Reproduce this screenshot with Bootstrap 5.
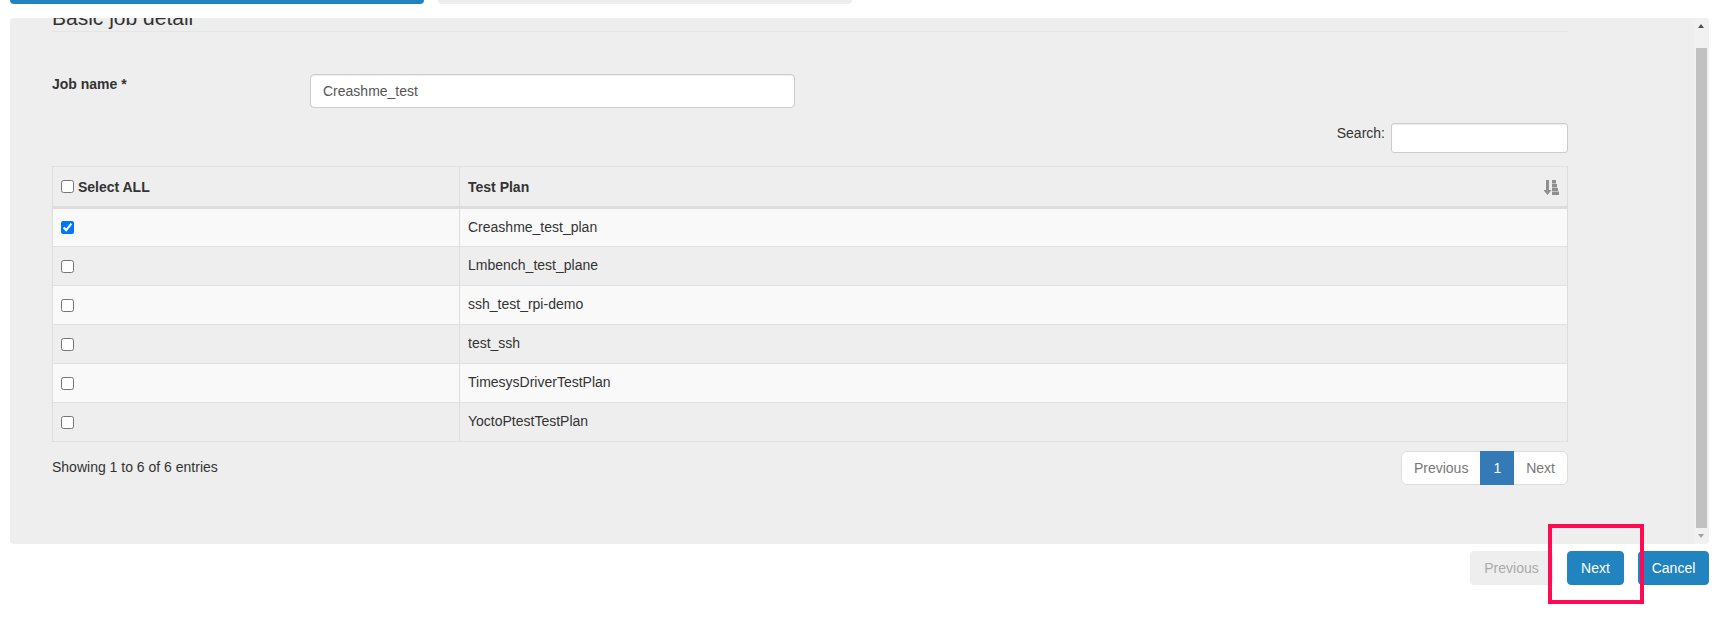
<!DOCTYPE html>
<html lang="en">
<head>
<meta charset="utf-8">
<title>Basic job detail</title>
<link href="https://cdn.jsdelivr.net/npm/bootstrap@5.3.0/dist/css/bootstrap.min.css" rel="stylesheet">
<style>
html,body{height:619px;overflow:hidden;background:#fff}
body{font-family:"Liberation Sans",Arial,sans-serif;font-size:14px;line-height:20px;color:#333;padding:0 4px 0 10px}
.tabs-row{height:4px;gap:14px}
.tab-bar{width:414px;height:4px;border-radius:0 0 4px 4px;background:#eee}
.tab-bar.on{background:#2184be}
.panel-box{height:526px;margin-top:14px;background:#eee;border-radius:4px;overflow:hidden}
.panel-main{width:1558px;padding:0 0 0 42px;flex:none}
.panel-inner{width:1516px}
.sect-title{font-size:21px;line-height:24px;font-weight:400;margin:-12px 0 0;padding-bottom:6px;height:26px;border-bottom:1px solid #e5e5e5;color:#333}
.name-row{margin-top:42px;height:34px}
.name-label{width:258px;font-weight:700;padding-top:0;line-height:20px;margin:0}
.name-input{width:485px;height:34px;font-size:14px;color:#555;padding:6px 12px;border:1px solid #ccc;border-radius:4px;box-shadow:inset 0 1px 1px rgba(0,0,0,.075)}
.search-row{margin-top:15px;height:30px;gap:6px}
.search-row label{margin:0;line-height:20px}
.search-input{width:177px;height:30px;font-size:14px;padding:5px 10px;border:1px solid #ccc;border-radius:3px;box-shadow:inset 0 1px 1px rgba(0,0,0,.075)}
.plan-table{margin:13px 0 0;table-layout:fixed;width:1516px;border-collapse:collapse;--bs-table-bg:transparent;--bs-table-striped-bg:transparent;--bs-table-color:#333;--bs-table-striped-color:#333;font-size:14px}
.plan-table>*>*>*{border:1px solid #ddd;padding:8px;line-height:20px;color:#333;box-shadow:none;vertical-align:middle}
.plan-table thead th{height:41px;border-bottom:3px solid #ddd;background:#eee;font-weight:700;position:relative;vertical-align:middle}
.plan-table tbody td{height:39px;padding-top:6px;padding-bottom:8px}
.plan-table tbody tr:nth-child(odd) td{background:#f9f9f9}
.plan-table tbody tr:nth-child(even) td{background:#eee}
.plan-table input{margin:0;width:13px;height:13px;vertical-align:middle;display:inline-block}
.plan-table thead input{vertical-align:-1px}
.col-check{width:407px}
.sort-glyph{position:absolute;right:8px;top:13px;width:15px;height:15px}
.foot-row{margin-top:8.500px}
.foot-info{padding-top:6px}
.plan-pager{margin:0}
.plan-pager .page-link{line-height:20px;height:34px;font-size:14px;padding:6px 12px;color:#777;border-color:#ddd}
.plan-pager .active .page-link{color:#fff;background:#337ab7;border-color:#337ab7}
.fake-scroll{width:15px;flex:none;margin-left:auto;background:#f1f1f1;position:relative}
.thumb-bar{position:absolute;left:2px;right:2px;top:30px;bottom:16px;background:#c1c1c1}
.arrow-up,.arrow-dn{position:absolute;left:4px;width:0;height:0;border-left:3.500px solid transparent;border-right:3.500px solid transparent}
.arrow-up{top:6px;border-bottom:4px solid #505050}
.arrow-dn{bottom:6px;border-top:4px solid #a3a3a3}
.action-row{margin-top:7px;height:34px}
.act-btn{height:34px;font-size:14px;line-height:20px;padding:6px 12px;border-radius:4px;border:1px solid #2184be;background:#2184be;color:#fff}
.act-btn.off{background:#eee;border-color:#eee;color:#aaa;opacity:1;width:83px;margin-right:14px}
.act-next{width:57px;margin-right:14px}
.act-cancel{width:71px}
.next-wrap{position:relative}
.red-frame{position:absolute;left:-19px;right:-20px;top:-27px;bottom:-19px;border:4px solid #ff0a54;pointer-events:none}
</style>
</head>
<body>
<div class="tabs-row d-flex">
  <div class="tab-bar on"></div>
  <div class="tab-bar"></div>
</div>
<div class="panel-box d-flex">
  <div class="panel-main">
    <div class="panel-inner">
      <h4 class="sect-title">Basic job detail</h4>
      <div class="name-row d-flex">
        <label class="name-label" for="jobName">Job name *</label>
        <input id="jobName" class="form-control name-input" type="text" value="Creashme_test">
      </div>
      <div class="search-row d-flex justify-content-end">
        <label for="srch">Search:</label>
        <input id="srch" class="form-control search-input" type="search">
      </div>
      <table class="table table-bordered table-striped plan-table">
        <colgroup><col class="col-check"><col></colgroup>
        <thead>
          <tr>
            <th><input type="checkbox" aria-label="Select all"> Select ALL</th>
            <th>Test Plan
              <svg class="sort-glyph" viewBox="0 0 15 15" fill="#8f8f8f" aria-hidden="true">
                <path d="M2 0h3v10h2.500l-4 5-4-5H2z"/>
                <rect x="8" y="0" width="4" height="3.500"/>
                <rect x="8" y="4" width="5" height="3.500"/>
                <rect x="8" y="8" width="6" height="3"/>
                <rect x="8" y="11.500" width="7" height="3.500"/>
              </svg>
            </th>
          </tr>
        </thead>
        <tbody>
          <tr><td><input type="checkbox" checked aria-label="Select"></td><td>Creashme_test_plan</td></tr>
          <tr><td><input type="checkbox" aria-label="Select"></td><td>Lmbench_test_plane</td></tr>
          <tr><td><input type="checkbox" aria-label="Select"></td><td>ssh_test_rpi-demo</td></tr>
          <tr><td><input type="checkbox" aria-label="Select"></td><td>test_ssh</td></tr>
          <tr><td><input type="checkbox" aria-label="Select"></td><td>TimesysDriverTestPlan</td></tr>
          <tr><td><input type="checkbox" aria-label="Select"></td><td>YoctoPtestTestPlan</td></tr>
        </tbody>
      </table>
      <div class="foot-row d-flex justify-content-between align-items-start">
        <div class="foot-info">Showing 1 to 6 of 6 entries</div>
        <ul class="pagination plan-pager">
          <li class="page-item"><a class="page-link" href="#">Previous</a></li>
          <li class="page-item active"><a class="page-link" href="#">1</a></li>
          <li class="page-item"><a class="page-link" href="#">Next</a></li>
        </ul>
      </div>
    </div>
  </div>
  <div class="fake-scroll">
    <span class="arrow-up"></span>
    <span class="thumb-bar"></span>
    <span class="arrow-dn"></span>
  </div>
</div>
<div class="action-row d-flex justify-content-end">
  <button class="btn act-btn off" type="button" disabled>Previous</button>
  <div class="next-wrap act-next">
    <button class="btn act-btn w-100" type="button">Next</button>
    <div class="red-frame"></div>
  </div>
  <button class="btn act-btn act-cancel" type="button">Cancel</button>
</div>
<script src="https://cdn.jsdelivr.net/npm/bootstrap@5.3.0/dist/js/bootstrap.bundle.min.js"></script>
</body>
</html>
